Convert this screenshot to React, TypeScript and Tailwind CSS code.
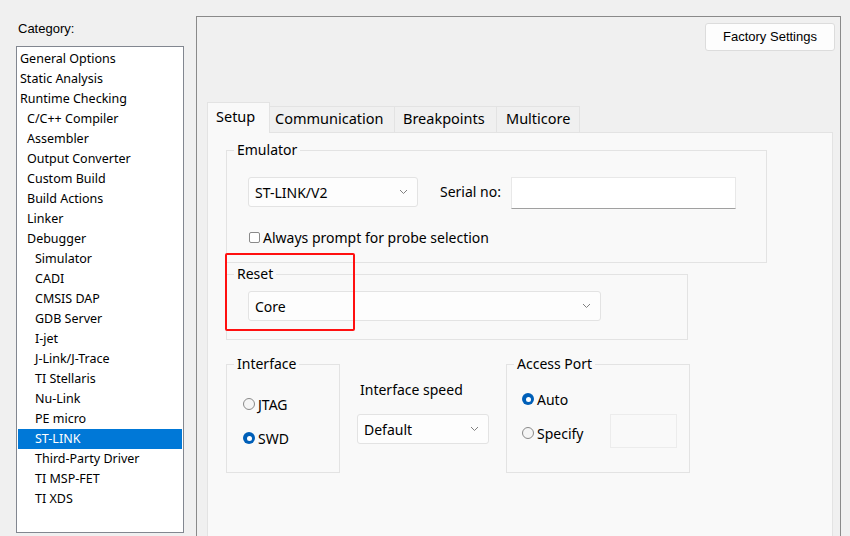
import React from "react";

const categories: { label: string; level: number; selected?: boolean }[] = [
  { label: "General Options", level: 0 },
  { label: "Static Analysis", level: 0 },
  { label: "Runtime Checking", level: 0 },
  { label: "C/C++ Compiler", level: 1 },
  { label: "Assembler", level: 1 },
  { label: "Output Converter", level: 1 },
  { label: "Custom Build", level: 1 },
  { label: "Build Actions", level: 1 },
  { label: "Linker", level: 1 },
  { label: "Debugger", level: 1 },
  { label: "Simulator", level: 2 },
  { label: "CADI", level: 2 },
  { label: "CMSIS DAP", level: 2 },
  { label: "GDB Server", level: 2 },
  { label: "I-jet", level: 2 },
  { label: "J-Link/J-Trace", level: 2 },
  { label: "TI Stellaris", level: 2 },
  { label: "Nu-Link", level: 2 },
  { label: "PE micro", level: 2 },
  { label: "ST-LINK", level: 2, selected: true },
  { label: "Third-Party Driver", level: 2 },
  { label: "TI MSP-FET", level: 2 },
  { label: "TI XDS", level: 2 },
];

const indent = ["pl-[2px]", "pl-[9px]", "pl-[17px]"];

function Chevron() {
  return (
    <svg width="9" height="6" viewBox="0 0 9 6" className="shrink-0">
      <path d="M1 1 L4.5 4.5 L8 1" fill="none" stroke="#808080" strokeWidth="1" />
    </svg>
  );
}

function Combo({ value, className }: { value: string; className: string }) {
  return (
    <div
      className={`flex items-center justify-between bg-[#fdfdfd] border border-[#e3e3e3] rounded-[3px] pl-[6px] pr-[9px] ${className}`}
    >
      <span>{value}</span>
      <Chevron />
    </div>
  );
}

function Radio({ checked, label }: { checked?: boolean; label: string }) {
  return (
    <div className="flex items-center h-[20px]">
      {checked ? (
        <span className="w-[12px] h-[12px] rounded-full bg-[#005fb8] flex items-center justify-center">
          <span className="w-[5px] h-[5px] rounded-full bg-white" />
        </span>
      ) : (
        <span className="w-[12px] h-[12px] rounded-full border border-[#8a8a8a] bg-[#f5f5f5]" />
      )}
      <span className="ml-[3px]">{label}</span>
    </div>
  );
}

// group box: caption sits over the top border line
function Group({
  title,
  className,
  children,
}: {
  title: string;
  className: string;
  children: React.ReactNode;
}) {
  return (
    <div className={`relative border border-[#e3e3e3] ${className}`}>
      <span className="absolute -top-[11px] left-[7px] px-[3px] leading-[20px] bg-[#f9f9f9]">
        {title}
      </span>
      {children}
    </div>
  );
}

export default function App() {
  return (
    <div className="relative w-[850px] h-[536px] overflow-hidden bg-[#f0f0f0] flex text-black font-['Noto_Sans',sans-serif]">
      {/* category tree */}
      <div className="w-[196px] shrink-0 pl-[16px] pt-[19px]">
        <div className="pl-[2px] leading-[20px] text-[13px] font-['Liberation_Sans',sans-serif]">
          Category:
        </div>
        <div className="mt-[7px] w-[168px] h-[487px] bg-white border border-[#828790] px-[1px] pt-[2px] text-[12.5px]">
          {categories.map((c) => (
            <div
              key={c.label}
              className={`h-[20px] leading-[20px] ${indent[c.level]} ${
                c.selected ? "bg-[#0078d7] text-white" : ""
              }`}
            >
              {c.label}
            </div>
          ))}
        </div>
      </div>

      {/* options page */}
      <div className="mt-[16px] w-[645px] h-[530px] shrink-0 border-t border-l border-r border-[#8a8a8a] flex flex-col">
        <button className="self-end mr-[5px] mt-[6px] w-[130px] h-[28px] bg-[#fdfdfd] border border-[#dcdcdc] rounded-[3px] text-[13px] font-['Liberation_Sans',sans-serif]">
          Factory Settings
        </button>

        <div className="ml-[10px] mt-[51px] flex items-end h-[31px] text-[14.5px] relative z-10 -mb-px">
          <div className="w-[63px] h-[31px] bg-[#f9f9f9] border border-b-0 border-[#e3e3e3] flex items-center pl-[8px] pb-[2px]">
            Setup
          </div>
          <div className="w-[125px] h-[27px] bg-[#f0f0f0] border border-l-0 border-[#e3e3e3] flex items-center pl-[5px] pb-[1px]">
            Communication
          </div>
          <div className="w-[102px] h-[27px] bg-[#f0f0f0] border border-l-0 border-[#e3e3e3] flex items-center pl-[8px] pb-[1px]">
            Breakpoints
          </div>
          <div className="w-[83px] h-[27px] bg-[#f0f0f0] border border-l-0 border-[#e3e3e3] flex items-center pl-[9px] pb-[1px]">
            Multicore
          </div>
        </div>

        <div className="relative ml-[10px] w-[626px] flex-1 bg-[#f9f9f9] border border-b-0 border-[#e3e3e3] pl-[18px] text-[14px]">
          <Group title="Emulator" className="mt-[17px] w-[541px] pl-[21px] pt-[26px] pb-[15px]">
            <div className="flex items-start">
              <Combo value="ST-LINK/V2" className="w-[170px] h-[30px]" />
              <span className="ml-[22px] h-[30px] leading-[30px]">Serial no:</span>
              <div className="ml-[10px] w-[225px] h-[32px] bg-white border border-[#e8e8e8] border-b-[#a0a0a0]" />
            </div>
            <div className="mt-[18px] h-[20px] flex items-center pl-[1px]">
              <span className="w-[11px] h-[11px] rounded-[2px] border border-[#8a8a8a] bg-white" />
              <span className="ml-[3px]">Always prompt for probe selection</span>
            </div>
          </Group>

          <Group title="Reset" className="mt-[11px] w-[462px] pl-[21px] pt-[16px] pb-[18px]">
            <Combo value="Core" className="w-[353px] h-[30px]" />
          </Group>

          <div className="mt-[24px] flex items-start">
            <Group title="Interface" className="w-[114px] pl-[16px] pt-[29px] pb-[24px]">
              <Radio label="JTAG" />
              <div className="mt-[14px]">
                <Radio checked label="SWD" />
              </div>
            </Group>

            <div className="ml-[17px] w-[132px]">
              <div className="mt-[16px] h-[20px] leading-[20px] pl-[3px]">Interface speed</div>
              <Combo value="Default" className="mt-[14px] w-[132px] h-[30px]" />
            </div>

            <Group title="Access Port" className="ml-[17px] w-[184px] pl-[15px] pt-[24px] pb-[24px]">
              <Radio checked label="Auto" />
              <div className="mt-[5px] h-[34px] flex items-center">
                <div className="w-[88px] pt-[4px]">
                  <Radio label="Specify" />
                </div>
                <div className="w-[67px] h-[34px] border border-[#ececec] bg-[#f9f9f9]" />
              </div>
            </Group>
          </div>

          {/* highlight drawn over the Reset group */}
          <div className="absolute left-[17px] top-[120px] w-[130px] h-[78px] border-2 border-[#ff1010] rounded-[2px] pointer-events-none" />
        </div>
      </div>
    </div>
  );
}
